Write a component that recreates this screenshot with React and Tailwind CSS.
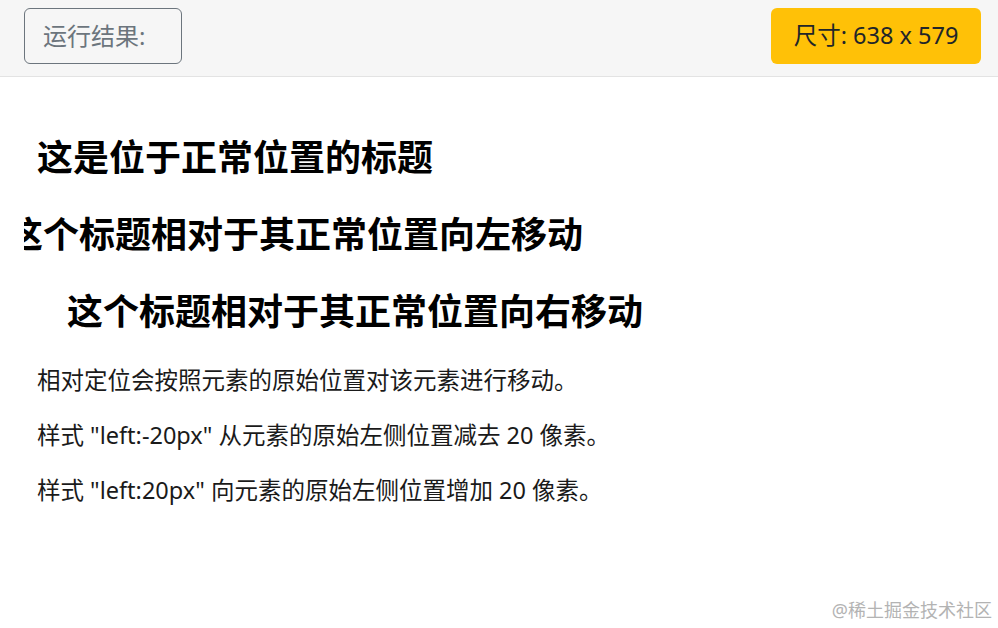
const font = { fontFamily: '"Noto Sans", "Noto Sans CJK SC", sans-serif' };

const headings = [
  { text: "这是位于正常位置的标题", shift: "" },
  { text: "这个标题相对于其正常位置向左移动", shift: "-left-[30px]" },
  { text: "这个标题相对于其正常位置向右移动", shift: "left-[30px]" },
];

const notes = [
  "相对定位会按照元素的原始位置对该元素进行移动。",
  '样式 "left:-20px" 从元素的原始左侧位置减去 20 像素。',
  '样式 "left:20px" 向元素的原始左侧位置增加 20 像素。',
];

const App = () => {
  return (
    <div
      className="relative h-[628px] w-[998px] overflow-hidden bg-white text-[#212529]"
      style={font}
    >
      <header className="flex h-[77px] items-start justify-between border-b border-[#e3e3e3] bg-[#f6f6f6] pl-[24px] pr-[17px] pt-[8px]">
        <button className="flex h-[56px] w-[158px] items-center rounded-[6px] border border-[#6c757d] pl-[18px] text-[24px] text-[#6c757d]">
          运行结果:
        </button>
        <button className="flex h-[56px] w-[210px] items-center justify-center rounded-[6px] bg-[#ffc107] text-[23.5px] text-[#212529]">
          尺寸: 638 x 579
        </button>
      </header>

      <div className="ml-[24px] flex flex-col gap-[29px] overflow-hidden pl-[13px] pt-[57px]">
        <div className="flex flex-col gap-[30px]">
          {headings.map((h) => (
            <h2
              key={h.text}
              className={`relative whitespace-nowrap text-[36px] font-bold leading-[47px] text-black ${h.shift}`}
            >
              {h.text}
            </h2>
          ))}
        </div>
        <div className="flex flex-col gap-[23px]">
          {notes.map((n) => (
            <p key={n} className="text-[23.5px] leading-[32px] text-[#1a1a1a]">
              {n}
            </p>
          ))}
        </div>
      </div>

      <div className="absolute bottom-[6px] right-[6px] text-[18px] leading-[24px] text-[#b3b3b3]">
        @稀土掘金技术社区
      </div>
    </div>
  );
};

export default App;
